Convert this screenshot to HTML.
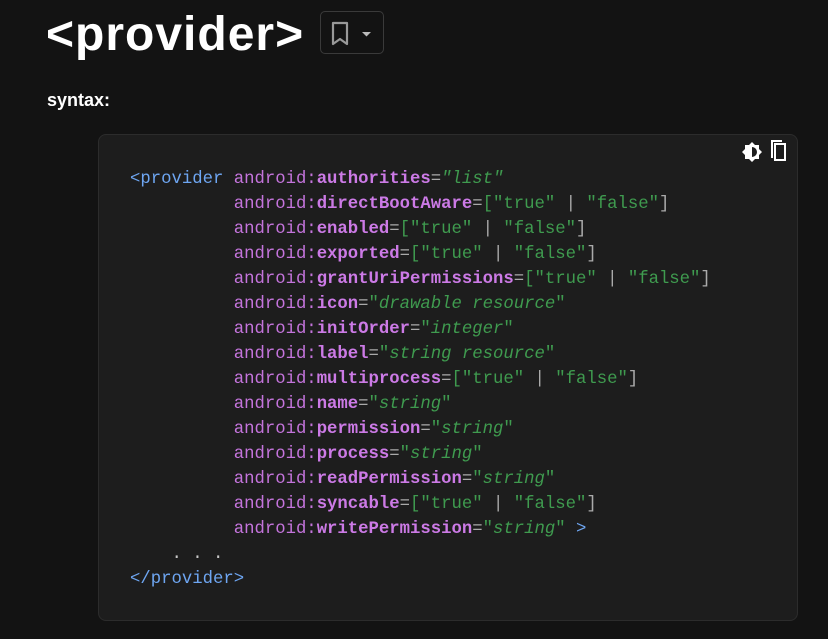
<!DOCTYPE html><html><head><style>
body{margin:0;background:#131313;width:828px;height:639px;overflow:hidden;font-family:"Liberation Sans",sans-serif;color:#fff;position:relative}
h1{position:absolute;left:46px;top:7px;margin:0;font-size:48px;font-weight:bold;letter-spacing:1px}
.bm{position:absolute;left:320px;top:11px;width:64px;height:43px;border:1px solid #3a3a3a;border-radius:5px;box-sizing:border-box}
.syn{position:absolute;left:47px;top:90px;font-weight:bold;font-size:18px}
.code{position:absolute;left:98px;top:134px;width:700px;height:487px;background:#1d1d1d;border:1px solid #2c2c2c;border-radius:8px;box-sizing:border-box}
pre{position:absolute;left:130px;top:167px;margin:0;font-family:"Liberation Mono",monospace;font-size:17.3px;line-height:25px;color:#c8c8c8}
.t{color:#6ea6f2}.a{color:#c474dc}.b{color:#cc7ae6;font-weight:bold}.s{color:#3f9b4f}.i{color:#3f9b4f;font-style:italic}.g{color:#aaa}
</style></head><body>
<h1>&lt;provider&gt;</h1>
<div class="bm"><svg width="64" height="43" viewBox="0 0 64 43"><path d="M12 11h14v21l-7-5-7 5z" fill="none" stroke="#999" stroke-width="2.2" stroke-linejoin="round"/><path d="M41 20h9l-4.5 4.5z" fill="#bbb"/></svg></div>
<div class="syn">syntax:</div>
<div class="code"><svg style="position:absolute;left:640px;top:4px" width="56" height="26" viewBox="0 0 56 26"><path d="M13 3l3 3h4v4l3 3-3 3v4h-4l-3 3-3-3H6v-4l-3-3 3-3V6h4z" fill="#fff"/><path d="M13 8a5 5 0 0 1 0 10z" fill="#1d1d1d"/><path d="M36 5h10v16H36z" fill="none" stroke="#fff" stroke-width="2"/><path d="M33 19V2h10" fill="none" stroke="#fff" stroke-width="2"/></svg></div>
<pre><span class="t">&lt;provider</span> <span class="a">android:</span><span class="b">authorities</span><span class="g">=</span><span class="i">"list"</span>
          <span class="a">android:</span><span class="b">directBootAware</span><span class="g">=</span><span class="s">["true"</span> <span class="g">|</span> <span class="s">"false"</span><span class="g">]</span>
          <span class="a">android:</span><span class="b">enabled</span><span class="g">=</span><span class="s">["true"</span> <span class="g">|</span> <span class="s">"false"</span><span class="g">]</span>
          <span class="a">android:</span><span class="b">exported</span><span class="g">=</span><span class="s">["true"</span> <span class="g">|</span> <span class="s">"false"</span><span class="g">]</span>
          <span class="a">android:</span><span class="b">grantUriPermissions</span><span class="g">=</span><span class="s">["true"</span> <span class="g">|</span> <span class="s">"false"</span><span class="g">]</span>
          <span class="a">android:</span><span class="b">icon</span><span class="g">=</span><span class="s">"</span><span class="i">drawable resource</span><span class="s">"</span>
          <span class="a">android:</span><span class="b">initOrder</span><span class="g">=</span><span class="s">"</span><span class="i">integer</span><span class="s">"</span>
          <span class="a">android:</span><span class="b">label</span><span class="g">=</span><span class="s">"</span><span class="i">string resource</span><span class="s">"</span>
          <span class="a">android:</span><span class="b">multiprocess</span><span class="g">=</span><span class="s">["true"</span> <span class="g">|</span> <span class="s">"false"</span><span class="g">]</span>
          <span class="a">android:</span><span class="b">name</span><span class="g">=</span><span class="s">"</span><span class="i">string</span><span class="s">"</span>
          <span class="a">android:</span><span class="b">permission</span><span class="g">=</span><span class="s">"</span><span class="i">string</span><span class="s">"</span>
          <span class="a">android:</span><span class="b">process</span><span class="g">=</span><span class="s">"</span><span class="i">string</span><span class="s">"</span>
          <span class="a">android:</span><span class="b">readPermission</span><span class="g">=</span><span class="s">"</span><span class="i">string</span><span class="s">"</span>
          <span class="a">android:</span><span class="b">syncable</span><span class="g">=</span><span class="s">["true"</span> <span class="g">|</span> <span class="s">"false"</span><span class="g">]</span>
          <span class="a">android:</span><span class="b">writePermission</span><span class="g">=</span><span class="s">"</span><span class="i">string</span><span class="s">"</span> <span class="t">&gt;</span>
    . . .
<span class="t">&lt;/provider&gt;</span></pre>
</body></html>
